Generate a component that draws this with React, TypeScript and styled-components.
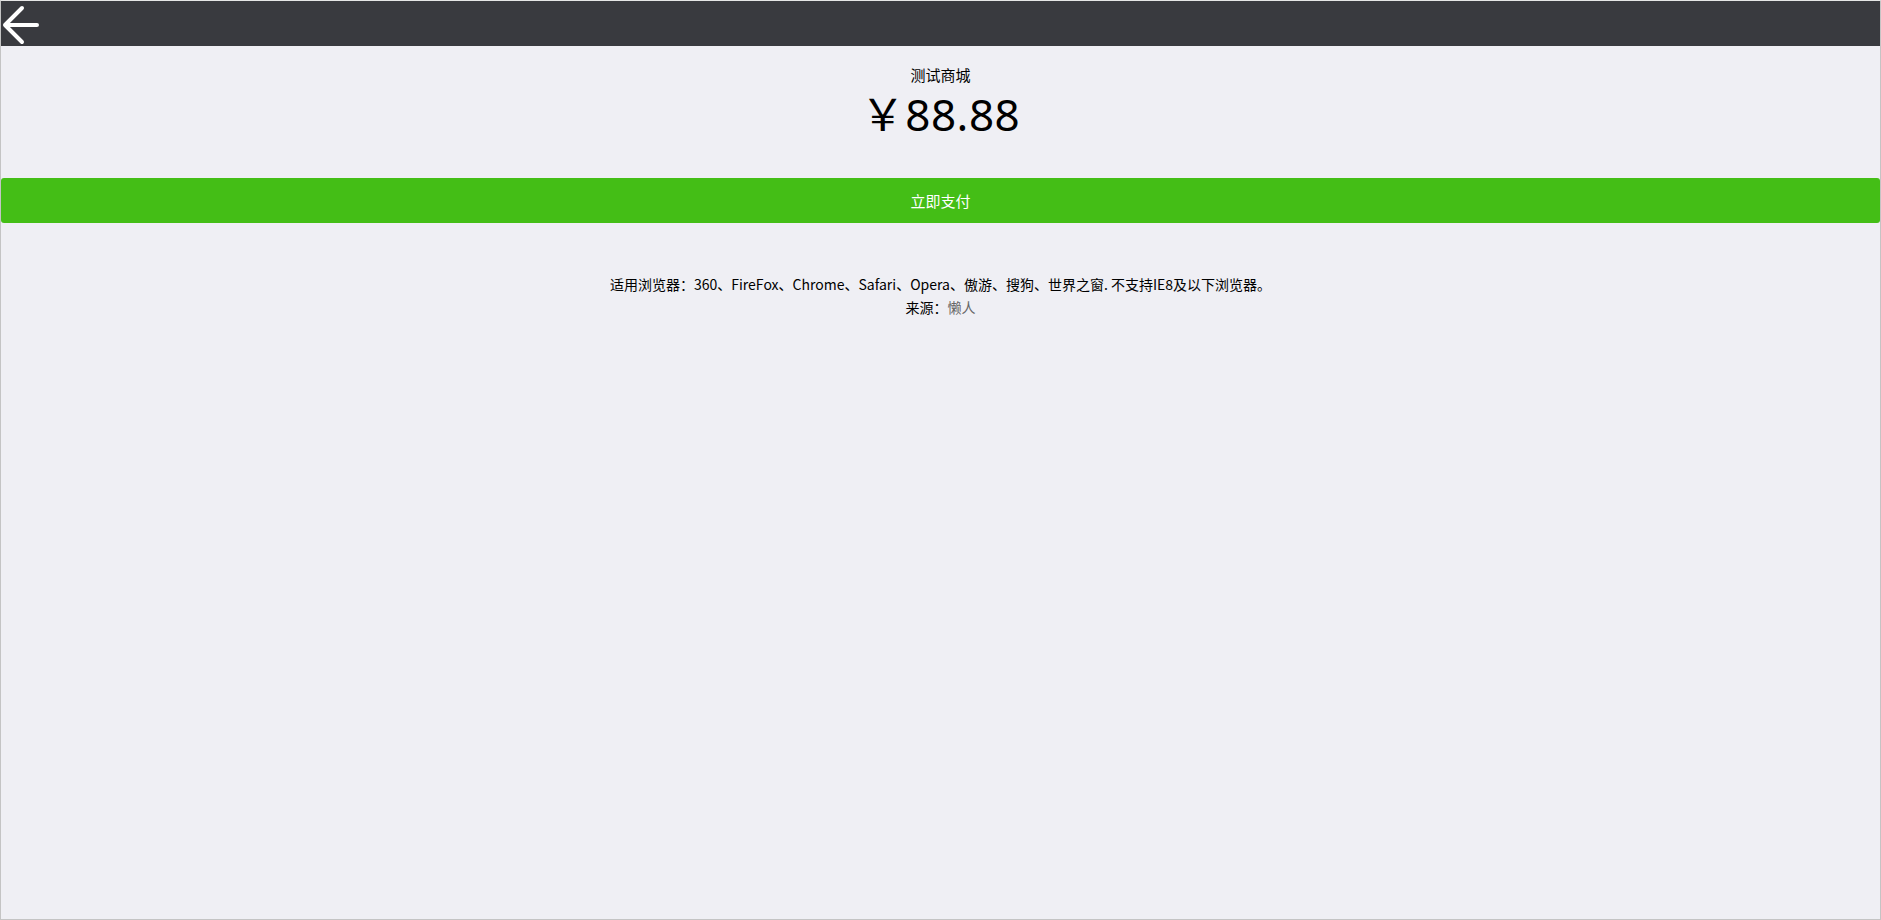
import React from "react";
import styled, { createGlobalStyle } from "styled-components";

const GlobalStyle = createGlobalStyle`
	html, body {
		margin: 0;
		padding: 0;
		height: 100%;
	}
	body {
		font-family: "Noto Sans CJK SC", "Noto Sans", "Liberation Sans", sans-serif;
		background: #efeff4;
		color: #000;
	}
`;

const Frame = styled.div`
	box-sizing: border-box;
	min-height: 100vh;
	border: 1px solid #c4c4c4;
	border-top-color: #e6e6e6;
	background: #efeff4;
	display: flex;
	flex-direction: column;
`;

const TopBar = styled.header`
	height: 45px;
	background: #393a3f;
	display: flex;
	align-items: center;
`;

const BackButton = styled.a`
	display: flex;
	align-items: center;
	cursor: pointer;
`;

const Summary = styled.section`
	display: flex;
	flex-direction: column;
	align-items: center;
	padding-top: 18px;
`;

const ShopName = styled.div`
	font-size: 15px;
	line-height: 22px;
`;

const Price = styled.div`
	font-size: 44px;
	line-height: 56px;
	font-family: "Noto Sans", "Noto Sans CJK SC", sans-serif;
	letter-spacing: 0.5px;
`;

const PayButton = styled.button`
	margin-top: 36px;
	height: 45px;
	width: 100%;
	border: none;
	border-radius: 3px;
	background: #44be16;
	color: #fff;
	font-family: inherit;
	font-size: 15px;
	cursor: pointer;
`;

const Notes = styled.div`
	margin-top: 50px;
	text-align: center;
	font-size: 14px;
	line-height: 23px;
`;

const Source = styled.a`
	color: #666;
	text-decoration: none;
`;

const ArrowIcon = () => (
	<svg width="40" height="45" viewBox="0 0 40 45">
		<path
			d="M21 7 L4 24 L21 41 M4 24 H36"
			fill="none"
			stroke="#fff"
			strokeWidth="4"
			strokeLinecap="round"
			strokeLinejoin="round"
		/>
	</svg>
);

const App = () => {
	return (
		<>
			<GlobalStyle />
			<Frame>
				<TopBar>
					<BackButton>
						<ArrowIcon />
					</BackButton>
				</TopBar>
				<Summary>
					<ShopName>测试商城</ShopName>
					<Price>￥88.88</Price>
				</Summary>
				<PayButton>立即支付</PayButton>
				<Notes>
					<div>
						适用浏览器：360、FireFox、Chrome、Safari、Opera、傲游、搜狗、世界之窗. 不支持IE8及以下浏览器。
					</div>
					<div>
						来源：<Source>懒人</Source>
					</div>
				</Notes>
			</Frame>
		</>
	);
};

export default App;
